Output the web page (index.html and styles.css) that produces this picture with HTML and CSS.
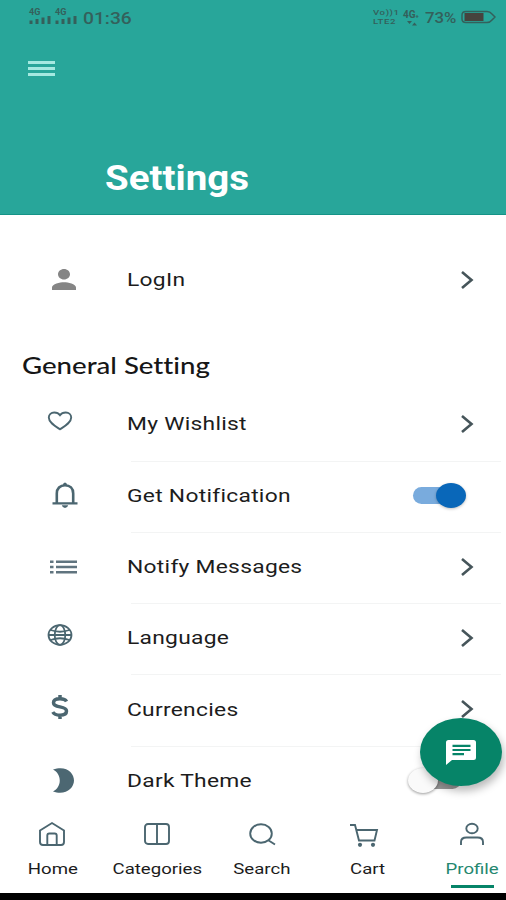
FILE: index.html
```html
<!DOCTYPE html>
<html lang="en">
  <head>
    <meta charset="UTF-8" />
    <title>Settings</title>
    <link rel="stylesheet" href="styles.css">
  </head>
  <body>
    <div class="app">
      <header class="header">
        <div class="status-bar">
          <div class="signal">
            <span class="signal-label">4G</span>
            <svg width="22" height="8" viewBox="0 0 22 8"><path d="M2 4.500V8M8 3V8M14 1.500V8M20 0V8" /></svg>
          </div>
          <div class="signal">
            <span class="signal-label">4G</span>
            <svg width="22" height="8" viewBox="0 0 22 8"><path d="M2 4.500V8M8 3V8M14 1.500V8M20 0V8" /></svg>
          </div>
          <span class="clock"><span class="wide">01:36</span></span>
          <div class="status-right">
            <div class="volte"><span class="wide">Vo))1</span><span class="wide">LTE2</span></div>
            <div class="data">
              <span>4G<small>+</small></span>
              <svg width="10" height="5" viewBox="0 0 10 5"><path d="M0 0h5L2.500 3zM5 4.500h5L7.500 1.500z" /></svg>
            </div>
            <span class="percent"><span class="wide">73%</span></span>
            <svg class="battery" width="35" height="14" viewBox="0 0 35 14">
              <path d="M5 1.500H26Q29 1.500 31 4L34 7L31 10Q29 12.500 26 12.500H5Q1 12.500 1 9V5Q1 1.500 5 1.500Z" />
              <rect class="charge" x="3.500" y="3" width="19" height="8" />
            </svg>
          </div>
        </div>
        <button class="menu-button" aria-label="Menu"><i></i><i></i><i></i></button>
        <h1 class="title"><span class="wide">Settings</span></h1>
      </header>

      <main class="content">
        <div class="row login">
          <span class="row-icon shift">
            <svg width="24" height="21" viewBox="4 4 16 16" preserveAspectRatio="none"><path fill="#858585" d="M12 12c2.210 0 4-1.790 4-4s-1.790-4-4-4-4 1.790-4 4 1.790 4 4 4zm0 2c-2.670 0-8 1.340-8 4v2h16v-2c0-2.660-5.330-4-8-4z" /></svg>
          </span>
          <span class="row-label"><span class="wide">LogIn</span></span>
          <svg class="chevron" width="14" height="20" viewBox="0 0 14 20"><path d="M2 2L11.500 10L2 18" /></svg>
        </div>

        <h2 class="section-title"><span class="wide">General Setting</span></h2>

        <div class="list">
          <div class="row">
            <span class="row-icon up">
              <svg class="line" width="26" height="20" viewBox="0 0 26 20"><path d="M13 18.300C8 15 1.800 11.500 1.800 6.500C1.800 3.500 4.200 1.500 7.200 1.500C9.800 1.500 11.800 2.500 13 4.200C14.200 2.500 16.200 1.500 18.800 1.500C21.800 1.500 24.200 3.500 24.200 6.500C24.200 11.500 18 15 13 18.300Z" /></svg>
            </span>
            <span class="row-label"><span class="wide">My Wishlist</span></span>
            <svg class="chevron" width="14" height="20" viewBox="0 0 14 20"><path d="M2 2L11.500 10L2 18" /></svg>
          </div>
          <div class="row">
            <span class="row-icon shift bell">
              <svg class="line" width="26" height="26" viewBox="0 0 26 26"><path d="M4.800 21V11.500C4.800 6.500 8 3.300 13 3.300C18 3.300 21.200 6.500 21.200 11.500V21" /><path class="solid" d="M0.500 20.300H25.500V22.600H0.500ZM9.800 23.300H16.200Q15.500 26 13 26Q10.500 26 9.800 23.300ZM11 3Q11 0.500 13 0.500Q15 0.500 15 3Z" /></svg>
            </span>
            <span class="row-label"><span class="wide">Get Notification</span></span>
            <span class="switch on"><i></i></span>
          </div>
          <div class="row">
            <span class="row-icon shift">
              <svg width="27" height="14" viewBox="0 0 27 14"><path fill="#60747f" d="M0 0.500h3.500v2.500H0zM0 5.700h3.500v2.500H0zM0 11h3.500v2.500H0zM6 0.500H27v2.500H6zM6 5.700H27v2.500H6zM6 11H27v2.500H6z" /></svg>
            </span>
            <span class="row-label"><span class="wide">Notify Messages</span></span>
            <svg class="chevron" width="14" height="20" viewBox="0 0 14 20"><path d="M2 2L11.500 10L2 18" /></svg>
          </div>
          <div class="row">
            <span class="row-icon up">
              <svg class="line globe" width="26" height="22" viewBox="0 0 26 22">
                <ellipse cx="13" cy="11" rx="11.500" ry="9.800" />
                <ellipse cx="13" cy="11" rx="5.300" ry="9.800" />
                <path d="M3.500 6C9 8 17 8 22.500 6M1.500 11H24.500M3.500 16C9 14 17 14 22.500 16" />
              </svg>
            </span>
            <span class="row-label"><span class="wide">Language</span></span>
            <svg class="chevron" width="14" height="20" viewBox="0 0 14 20"><path d="M2 2L11.500 10L2 18" /></svg>
          </div>
          <div class="row">
            <span class="row-icon up">
              <svg class="line dollar" width="20" height="26" viewBox="0 0 20 26"><path d="M16.500 7.500C15.500 5.500 13 4.800 10 4.800C6 4.800 3.500 6.300 3.500 8.800C3.500 11.500 6 12.200 10 12.900C14 13.600 16.500 14.400 16.500 17.100C16.500 19.700 14 21.200 10 21.200C6.500 21.200 4 20.200 2.800 18M10 1V5M10 21V25" /></svg>
            </span>
            <span class="row-label"><span class="wide">Currencies</span></span>
            <svg class="chevron" width="14" height="20" viewBox="0 0 14 20"><path d="M2 2L11.500 10L2 18" /></svg>
          </div>
          <div class="row">
            <span class="row-icon shift">
              <svg width="21" height="25" viewBox="0 0 21 25"><path fill="#4c6772" d="M0 1.500C13 -3 21 4.500 21 12.500C21 20.500 12 28 0 23.500C9 19 9 6 0 1.500Z" /></svg>
            </span>
            <span class="row-label"><span class="wide">Dark Theme</span></span>
            <span class="switch off"><i></i></span>
          </div>
        </div>
      </main>

      <button class="chat-button" aria-label="Chat">
        <svg width="30" height="25" viewBox="0 0 30 25">
          <path fill="#fff" d="M2.500 0H27.500Q30 0 30 2.500V17.500Q30 20 27.500 20H6L0 25V2.500Q0 0 2.500 0Z" />
          <path stroke="#068468" stroke-width="2.200" d="M6.500 5.800H24.500M6.500 10H24.500M6.500 14.200H18" />
        </svg>
      </button>

      <nav class="tab-bar">
        <a class="tab">
          <svg class="line" width="28" height="26" viewBox="0 0 28 26"><path d="M2 9.500L14 2L26 9.500V21Q26 24 23 24H5Q2 24 2 21ZM9.300 24V14.500Q9.300 12.500 11.300 12.500H16.700Q18.700 12.500 18.700 14.500V24" /></svg>
          <span class="tab-label"><span class="wide">Home</span></span>
        </a>
        <a class="tab">
          <svg class="line" width="28" height="26" viewBox="0 0 28 26"><rect x="2" y="3" width="24" height="20" rx="3" /><path d="M14 3V23" /></svg>
          <span class="tab-label"><span class="wide">Categories</span></span>
        </a>
        <a class="tab">
          <svg class="line" width="28" height="26" viewBox="0 0 28 26"><ellipse cx="13" cy="12.500" rx="10.800" ry="9.300" /><path d="M20.300 19.300L27 23.500" /></svg>
          <span class="tab-label"><span class="wide">Search</span></span>
        </a>
        <a class="tab">
          <svg class="line cart" width="30" height="26" viewBox="0 0 30 26"><path d="M1 4H6L10 19.500H25.500L28 9H8" /><circle class="solid" cx="11" cy="23.800" r="2.100" /><circle class="solid" cx="24" cy="23.800" r="2.100" /></svg>
          <span class="tab-label"><span class="wide">Cart</span></span>
        </a>
        <a class="tab active">
          <svg class="line" width="28" height="26" viewBox="0 0 28 26"><ellipse cx="14" cy="7.500" rx="5.700" ry="4.800" /><path d="M3 24V21Q3 16.500 8.500 16.500H19.500Q25 16.500 25 21V24" /></svg>
          <span class="tab-label"><span class="wide">Profile</span></span>
        </a>
      </nav>
    </div>
  </body>
</html>
```
FILE: styles.css
```css
body {
  margin: 0;
  background: #fff;
  font-family: Roboto, "Liberation Sans", sans-serif;
}

button {
  padding: 0;
  border: none;
  background: none;
}

svg {
  display: block;
  flex: none;
}

.app {
  position: relative;
  display: flex;
  flex-direction: column;
  height: 900px;
  overflow: hidden;
}

/* expanded lettering */
.wide {
  display: inline-block;
  transform: scaleX(1.2);
  transform-origin: left center;
  white-space: nowrap;
}

/* header */
.header {
  flex: none;
  height: 215px;
  background: #28a69a;
  box-sizing: border-box;
  border-bottom: 1px solid #159387;
}

.status-bar {
  display: flex;
  align-items: flex-start;
  height: 26px;
  padding: 9px 10px 0 29px;
  box-sizing: border-box;
  color: #34605b;
}

.signal {
  width: 26px;
  flex: none;
}

.signal-label {
  display: block;
  height: 7px;
  font-size: 9px;
  line-height: 7px;
  font-weight: 700;
}

.signal svg path {
  stroke: #34605b;
  stroke-width: 3;
}

.clock {
  margin-left: 2px;
  font-size: 16px;
  line-height: 19px;
  font-weight: 500;
}

.status-right {
  display: flex;
  margin-left: auto;
}

.volte {
  display: flex;
  flex-direction: column;
  align-items: flex-start;
  gap: 1px;
  width: 30px;
  font-size: 8px;
  line-height: 8px;
  font-weight: 500;
  letter-spacing: 0.500px;
}

.data {
  width: 22px;
  font-size: 10px;
  line-height: 11px;
  font-weight: 700;
}

.data small {
  font-size: 6px;
}

.data svg {
  margin-left: 4px;
  fill: #34605b;
}

.percent {
  width: 36px;
  font-size: 14px;
  line-height: 19px;
  font-weight: 500;
}

.battery {
  margin-top: 1px;
  fill: none;
  stroke: #34605b;
  stroke-width: 1.500;
}

.battery .charge {
  fill: #46433e;
  stroke: none;
}

.menu-button {
  display: flex;
  flex-direction: column;
  gap: 3px;
  margin: 35px 0 0 28px;
}

.menu-button i {
  width: 27px;
  height: 3px;
  background: #a5e9e1;
}

.title {
  margin: 82px 0 0 105px;
  font-size: 35px;
  line-height: 42px;
  font-weight: 700;
  color: #fff;
}

.title .wide {
  transform: scaleX(1.100);
}

/* settings rows */
.content {
  flex: 1;
  min-height: 0;
}

.row {
  position: relative;
  display: flex;
  align-items: center;
  height: 71.300px;
  padding: 0 32px 4px 0;
  box-sizing: border-box;
}

.list .row:not(:last-child)::after {
  content: "";
  position: absolute;
  left: 131px;
  right: 5px;
  bottom: 0;
  height: 1px;
  background: #f3f4f4;
}

.login {
  margin-top: 31px;
}

.row-icon {
  display: flex;
  justify-content: center;
  width: 120px;
  margin-right: 7px;
}

.row-icon.shift {
  width: 127px;
  margin-right: 0;
}

.row-icon.bell {
  padding-left: 2px;
  box-sizing: border-box;
}

.row-icon.up {
  padding-bottom: 5px;
}

.line {
  fill: none;
  stroke: #4b6670;
  stroke-width: 1.900;
}

.line .solid {
  fill: #4b6670;
  stroke: none;
}

.bell .line {
  stroke-width: 2.600;
}

.globe {
  stroke-width: 1.800;
}

.dollar {
  stroke-width: 3.500;
}

.row-label {
  flex: 1;
  font-size: 19px;
  letter-spacing: 0.230px;
  color: #1c1c1c;
}

.chevron {
  fill: none;
  stroke: #46555a;
  stroke-width: 2.600;
}

.section-title {
  margin: 32px 0 9px 22px;
  font-family: Lato, "Liberation Sans", sans-serif;
  font-size: 23px;
  line-height: 32px;
  font-weight: 500;
  font-variant-ligatures: none;
  color: #161616;
}

.switch {
  position: relative;
  width: 44px;
  height: 17px;
  border-radius: 9px;
}

.switch i {
  position: absolute;
  top: -4px;
  width: 30px;
  height: 25px;
  border-radius: 50%;
}

.switch.on {
  margin-right: 17px;
  background: #79abdd;
}

.switch.on i {
  left: 23px;
  background: #0967b9;
  box-shadow: 0 1px 3px rgba(0, 0, 0, 0.25);
}

.switch.off {
  margin-right: 13px;
  background: #999;
}

.switch.off i {
  left: -9px;
  background: #fafafa;
  box-shadow: 0 1px 3px rgba(0, 0, 0, 0.4);
}

/* floating chat button */
.chat-button {
  position: absolute;
  left: 420px;
  top: 718px;
  z-index: 2;
  display: flex;
  align-items: center;
  justify-content: center;
  width: 82px;
  height: 68px;
  border-radius: 50%;
  background: #068468;
  box-shadow: 2px 5px 9px rgba(0, 0, 0, 0.28);
}

/* bottom tabs */
.tab-bar {
  position: relative;
  display: flex;
  flex: none;
  height: 100px;
  border-bottom: 7px solid #000;
  box-sizing: border-box;
  background: #fff;
}

.tab {
  display: flex;
  flex-direction: column;
  align-items: center;
  flex: none;
  width: 104.900px;
  padding-top: 21px;
}

.cart {
  margin-right: 7px;
}

.tab-label {
  margin-top: 12px;
  font-size: 15.500px;
  line-height: 20px;
  color: #1c1c1c;
}

.tab-label .wide {
  transform-origin: center;
}

.active .tab-label {
  color: #25876f;
}

.active::after {
  content: "";
  width: 43px;
  height: 3px;
  margin-top: 6px;
  background: #068468;
}
```
